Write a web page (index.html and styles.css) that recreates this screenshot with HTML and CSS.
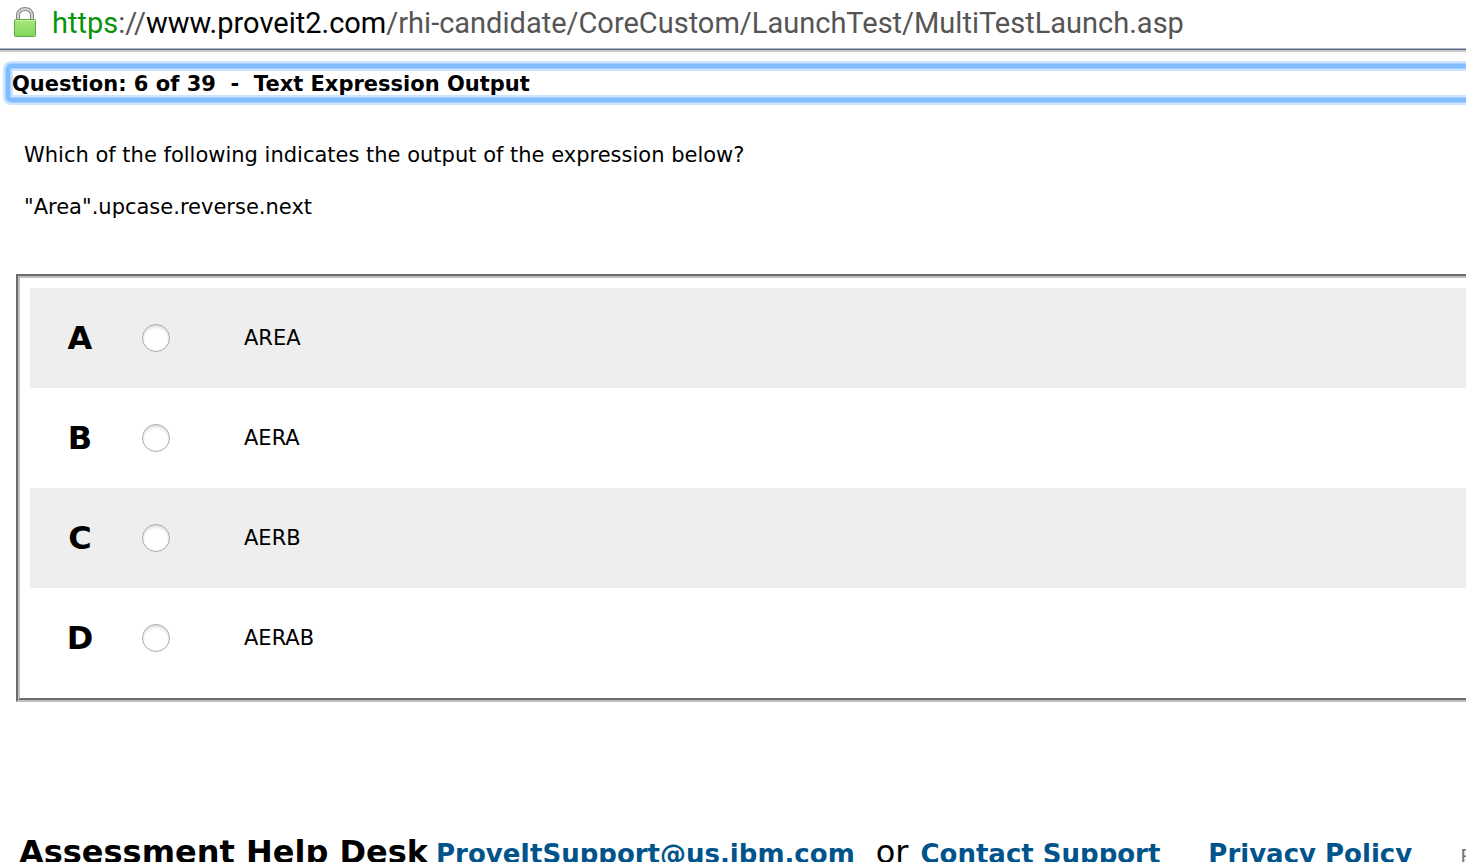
FILE: index.html
```html
<!DOCTYPE html>
<html lang="en">
<head>
<meta charset="utf-8">
<title>Question 6 of 39</title>
<link rel="stylesheet" href="styles.css">
</head>
<body>
<header class="address">
<svg class="lock" viewBox="0 0 26 32" aria-hidden="true"><defs><linearGradient id="g" x1="0" y1="0" x2="0" y2="1"><stop offset="0" stop-color="#a9e67e"/><stop offset="1" stop-color="#7fd85c"/></linearGradient></defs><path d="M6 14V8a7 6 0 0 1 14 0v6" fill="none" stroke="#858585" stroke-width="4"/><path d="M6 14V8a7 6 0 0 1 14 0v6" fill="none" stroke="#d5d5d5" stroke-width="2"/><rect x="2.500" y="12.500" width="21" height="17" rx="1" fill="url(#g)" stroke="#62a83c"/><path d="M3 13.500h20" stroke="#c9f3a9"/></svg>
<span class="url"><span class="scheme">https</span>://<span class="host">www.proveit2.com</span>/rhi-candidate/CoreCustom/LaunchTest/MultiTestLaunch.asp</span>
</header>
<main>
<h1 class="title">Question: 6 of 39&nbsp; -&nbsp; Text Expression Output</h1>
<section class="question">
<p>Which of the following indicates the output of the expression below?</p>
<p>"Area".upcase.reverse.next</p>
</section>
<div class="answers">
<label class="answer"><b class="letter">A</b><input class="radio" type="radio" name="answer"><span>AREA</span></label>
<label class="answer"><b class="letter">B</b><input class="radio" type="radio" name="answer"><span>AERA</span></label>
<label class="answer"><b class="letter">C</b><input class="radio" type="radio" name="answer"><span>AERB</span></label>
<label class="answer"><b class="letter">D</b><input class="radio" type="radio" name="answer"><span>AERAB</span></label>
</div>
</main>
<footer class="footer"><b class="desk">Assessment Help Desk</b><a href="#">ProveItSupport@us.ibm.com</a><span class="or">or</span><a href="#">Contact Support</a><a class="privacy" href="#">Privacy Policy</a><span class="rest">P</span></footer>
</body>
</html>
```
FILE: styles.css
```css
* { box-sizing: border-box; }
body { margin: 0; height: 100vh; overflow: hidden; background: #fff; color: #000; font-family: Verdana, "DejaVu Sans", sans-serif; }
.address { display: flex; align-items: flex-start; height: 52px; padding: 7px 12px 0; border-bottom: 2px solid #cacaca; box-shadow: inset 0 -1px #5f6570, inset 0 -2px #a9b8d0; }
.lock { width: 26px; height: 32px; flex: none; }
.url { margin-left: 14px; font: 29px/32px Roboto, sans-serif; color: #555; white-space: nowrap; }
.scheme { color: #0a930a; }
.host { color: #000; }
.title { margin: 12px -20px 0 6px; padding: 2px 0 0 2px; border: 4px solid #80bcff; border-radius: 5px; box-shadow: 0 0 0 1px #a6d0ff, 0 0 0 3px #cce4ff, inset 0 0 0 1px #a6d0ff, inset 0 0 0 3px #cce4ff; font-size: 21px; line-height: 28px; white-space: nowrap; }
.question { padding: 39px 24px 0; font-size: 21px; line-height: 28px; }
.question p { margin: 0 0 24px; }
.answers { margin: 53px -20px 0 16px; padding: 10px; border: 4px groove #c0c0c0; }
.answer { display: flex; align-items: center; height: 100px; font-size: 21px; }
.answer:nth-child(odd) { background: #eee; }
.letter { width: 100px; text-align: center; font-size: 32px; }
.radio { appearance: none; width: 28px; height: 28px; margin: 0 74px 0 12px; border: 1px solid #aaa; border-radius: 50%; background: #fff; box-shadow: inset 0 2px 3px #ddd; }
.footer { display: flex; align-items: baseline; margin-top: 130px; padding-left: 19px; white-space: nowrap; font-size: 26px; line-height: 40px; }
.desk { font-size: 32px; margin-right: 8px; }
.footer a { color: #00548b; font-weight: bold; text-decoration: none; }
.or { font-size: 32px; margin: 0 12px 0 21px; }
.footer .privacy { margin-left: 48px; }
.rest { margin-left: 48px; font-size: 20px; color: #777; }
```
